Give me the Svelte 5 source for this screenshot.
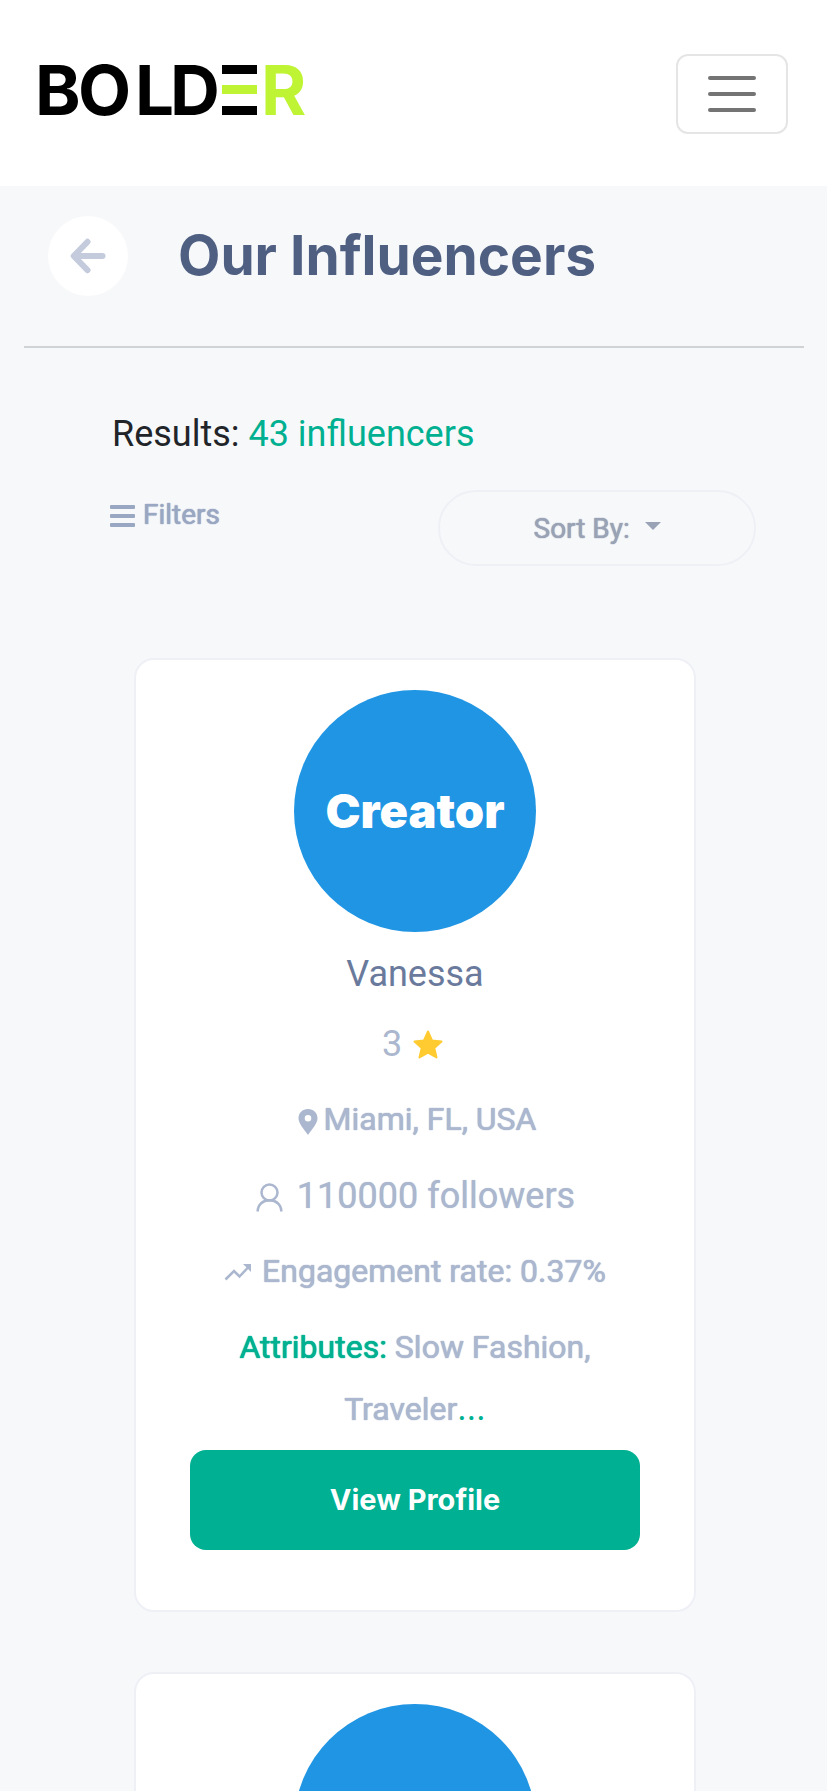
<script>
  const total = 43;
  const influencers = [
    {
      id: 1,
      profile: {
        name: 'Vanessa',
        rating: 3,
        location: 'Miami, FL, USA',
        followers: 110000,
        engagement: '0.37%',
        attributes: 'Slow Fashion, Traveler'
      }
    },
    { id: 2, profile: null }
  ];
</script>

<header class="navbar">
  <a class="brand" href="#home" aria-label="BOLDER">
    <svg width="262" height="58" viewBox="0 0 262 58" aria-hidden="true">
      <text class="brand-text" y="50" x="-5 38 95 130">BOLD</text>
      <rect x="182" y="0" width="35" height="9" />
      <rect class="lime" x="182" y="20" width="35" height="9" />
      <rect x="182" y="41" width="35" height="9" />
      <text class="brand-text lime" y="50" x="221">R</text>
    </svg>
  </a>
  <button class="toggler" type="button" aria-label="Menu">
    <svg width="60" height="60" viewBox="0 0 30 30" aria-hidden="true">
      <path d="M4 7h22M4 15h22M4 23h22" fill="none" stroke="#747474" stroke-width="2" stroke-linecap="round" />
    </svg>
  </button>
</header>

<main class="page">
  <div class="page-head">
    <a class="back" href="#back" aria-label="Back">
      <svg width="36" height="36" viewBox="0 0 36 36" aria-hidden="true">
        <path d="M17.500 3.800 3.700 18l13.800 14.200M4.500 18h28" fill="none" stroke="#c4cbdc" stroke-width="6" stroke-linecap="round" stroke-linejoin="round" />
      </svg>
    </a>
    <h1>Our Influencers</h1>
  </div>

  <section class="tools">
    <p class="results">Results: <span>{total} influencers</span></p>
    <div class="toolbar">
      <button class="filters" type="button">
        <svg width="25" height="24" viewBox="0 0 25 24" aria-hidden="true">
          <rect y="2" width="25" height="4" rx="1" />
          <rect y="11" width="25" height="4" rx="1" />
          <rect y="20" width="25" height="4" rx="1" />
        </svg>
        Filters
      </button>
      <label class="sort">
        <select aria-label="Sort By:">
          <option>Sort By:</option>
        </select>
        <svg width="16" height="12" viewBox="0 0 16 12" aria-hidden="true"><path d="M0 0h16L8 8z" /></svg>
      </label>
    </div>
  </section>

  <div class="cards">
    {#each influencers as { id, profile } (id)}
      <article class="card">
        <div class="avatar">{#if profile}Creator{/if}</div>
        {#if profile}
          <h2>{profile.name}</h2>
          <p class="row large rating">
            {profile.rating}
            <svg width="36" height="32" viewBox="0 0 36 32" aria-hidden="true">
              <path d="M16 3.500l4 9 9.500.900-7.200 6.500 2.200 9.600L16 24.600l-8.500 4.900 2.200-9.600-7.200-6.500 9.500-.9z" fill="#ffcb30" stroke="#ffcb30" stroke-width="2" stroke-linejoin="round" />
            </svg>
          </p>
          <p class="row strong location">
            <svg width="24" height="32" viewBox="-4 -6 24 32" aria-hidden="true">
              <path d="M10 0C4.400 0 .500 4 .500 9.300.500 14.500 6 20.500 10 26c4-5.500 9.500-11.500 9.500-16.700C19.500 4 15.600 0 10 0zm0 6a3.300 3.300 0 1 1 0 6.600A3.300 3.300 0 0 1 10 6z" fill="currentColor" fill-rule="evenodd" />
            </svg>
            {profile.location}
          </p>
          <p class="row large followers">
            <svg width="28" height="32" viewBox="0 -2 28 32" aria-hidden="true">
              <g fill="none" stroke="currentColor" stroke-width="2.500">
                <circle cx="14.500" cy="10.500" r="8" />
                <path d="M2.700 29.500C2.700 22.500 8 18.300 14.500 18.300s11.800 4.200 11.800 11.200" />
              </g>
            </svg>
            {profile.followers} followers
          </p>
          <p class="row strong engagement">
            <svg width="28" height="20" viewBox="0 -2 28 20" aria-hidden="true">
              <path d="M1.500 16.500 10 8l5.500 5.500L24 4.500" fill="none" stroke="currentColor" stroke-width="2.500" />
              <path d="M19 1h8v8z" fill="currentColor" />
            </svg>
            Engagement rate: {profile.engagement}
          </p>
          <p class="attributes strong"><b>Attributes:</b> {profile.attributes}<b class="more">...</b></p>
          <a class="profile" href="#profile">View Profile</a>
        {/if}
      </article>
    {/each}
  </div>
</main>

<style>
  :global(body) {
    margin: 0;
    background: #f7f8fa;
    color: #212529;
    font-family: Roboto, sans-serif;
  }
  svg {
    display: block;
    flex: none;
  }
  p, h1, h2 {
    margin: 0;
  }
  .navbar {
    display: flex;
    justify-content: space-between;
    align-items: center;
    box-sizing: border-box;
    min-height: 186px;
    padding: 2px 39px 0 40px;
    background: #fff;
  }
  .brand svg {
    overflow: visible;
  }
  .brand-text {
    font: 700 69px Inter, sans-serif;
  }
  .brand .lime {
    fill: #bff435;
  }
  .toggler {
    display: flex;
    justify-content: center;
    align-items: center;
    width: 112px;
    height: 80px;
    padding: 0;
    border: 2px solid #e5e5e5;
    border-radius: 12px;
    background: none;
  }
  .page {
    padding: 0 23px 60px 24px;
  }
  .page-head {
    display: flex;
    align-items: center;
    gap: 50px;
    padding: 30px 24px 50px;
    border-bottom: 2px solid #d0d3d6;
  }
  .back {
    display: flex;
    justify-content: center;
    align-items: center;
    flex: none;
    width: 80px;
    height: 80px;
    border-radius: 50%;
    background: #fff;
  }
  h1 {
    padding-bottom: 2px;
    color: #4f5f82;
    font: 700 55px/78px Inter, sans-serif;
  }
  .tools {
    padding: 64px 48px 0 86px;
  }
  .results {
    padding-left: 2px;
    font-size: 36px;
    line-height: 44px;
  }
  .results span {
    color: #00b090;
  }
  .toolbar {
    display: flex;
    justify-content: space-between;
    align-items: flex-start;
    padding-top: 34px;
  }
  .filters {
    display: flex;
    align-items: center;
    gap: 8px;
    padding: 9px 0;
    border: 0;
    background: none;
    color: #9aa7c2;
    font: 400 28px/32px Roboto, sans-serif;
    text-shadow: 0 0 1px currentColor, 0 0 1px currentColor;
  }
  .filters svg {
    fill: currentColor;
  }
  .sort {
    display: flex;
    justify-content: center;
    align-items: center;
    gap: 14px;
    box-sizing: border-box;
    flex: 0 1 318px;
    height: 76px;
    border: 2px solid #eef0f6;
    border-radius: 38px;
    color: #9aa3b5;
  }
  .sort select {
    appearance: none;
    padding: 2px 0 0;
    border: 0;
    background: none;
    color: inherit;
    font: 400 28px/36px Roboto, sans-serif;
    text-shadow: 0 0 1px currentColor, 0 0 1px currentColor;
  }
  .sort svg {
    fill: currentColor;
  }
  .cards {
    display: grid;
    gap: 60px;
    padding: 92px 108px 0 110px;
  }
  .card {
    display: flex;
    flex-direction: column;
    align-items: center;
    padding: 30px 54px 60px;
    border: 2px solid #eef0f6;
    border-radius: 20px;
    background: #fff;
    color: #abb7ce;
    text-align: center;
  }
  .avatar {
    display: flex;
    justify-content: center;
    align-items: center;
    width: 242px;
    height: 242px;
    border-radius: 50%;
    background: #2095e3;
    color: #fff;
    font: 900 47px/48px Inter, sans-serif;
  }
  h2 {
    padding-top: 10px;
    color: #6a7a9c;
    font-size: 36px;
    font-weight: 400;
    line-height: 64px;
  }
  .row {
    display: flex;
    align-items: center;
    justify-content: center;
    box-sizing: border-box;
    min-height: 76px;
  }
  .large {
    font-size: 36px;
  }
  .strong {
    font-size: 32px;
    text-shadow: 0 0 1px currentColor, 0 0 1px currentColor;
  }
  .row.strong {
    padding-bottom: 2px;
  }
  .rating {
    gap: 10px;
  }
  .location {
    gap: 6px;
  }
  .followers {
    gap: 14px;
    text-shadow: 0 0 1px currentColor;
  }
  .engagement {
    gap: 10px;
  }
  .attributes {
    max-width: 400px;
    padding: 6px 0 10px;
    line-height: 62px;
  }
  .attributes b {
    color: #00b090;
    font-weight: 400;
  }
  .attributes .more {
    font-size: 36px;
    line-height: 1;
    text-shadow: none;
  }
  .profile {
    align-self: stretch;
    border-radius: 16px;
    background: #00b092;
    color: #fff;
    font: 700 29px/100px Inter, sans-serif;
    text-decoration: none;
  }
</style>
